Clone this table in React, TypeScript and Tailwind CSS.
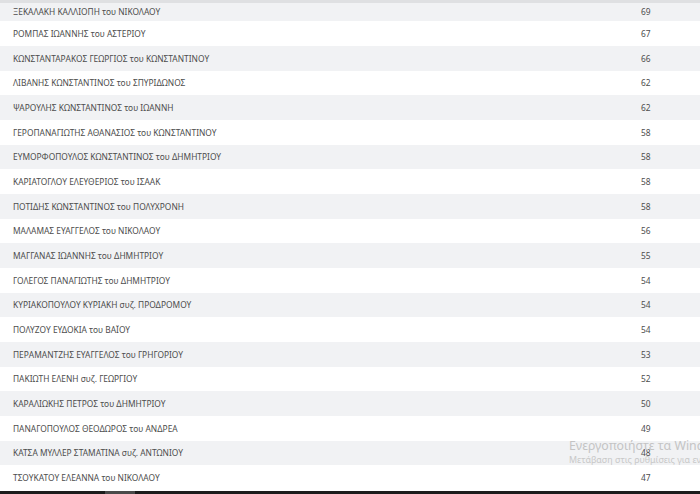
import React from "react";

const rows: [string, number][] = [
  ["ΞΕΚΑΛΑΚΗ ΚΑΛΛΙΟΠΗ του ΝΙΚΟΛΑΟΥ", 69],
  ["ΡΟΜΠΑΣ ΙΩΑΝΝΗΣ του ΑΣΤΕΡΙΟΥ", 67],
  ["ΚΩΝΣΤΑΝΤΑΡΑΚΟΣ ΓΕΩΡΓΙΟΣ του ΚΩΝΣΤΑΝΤΙΝΟΥ", 66],
  ["ΛΙΒΑΝΗΣ ΚΩΝΣΤΑΝΤΙΝΟΣ του ΣΠΥΡΙΔΩΝΟΣ", 62],
  ["ΨΑΡΟΥΛΗΣ ΚΩΝΣΤΑΝΤΙΝΟΣ του ΙΩΑΝΝΗ", 62],
  ["ΓΕΡΟΠΑΝΑΓΙΩΤΗΣ ΑΘΑΝΑΣΙΟΣ του ΚΩΝΣΤΑΝΤΙΝΟΥ", 58],
  ["ΕΥΜΟΡΦΟΠΟΥΛΟΣ ΚΩΝΣΤΑΝΤΙΝΟΣ του ΔΗΜΗΤΡΙΟΥ", 58],
  ["ΚΑΡΙΑΤΟΓΛΟΥ ΕΛΕΥΘΕΡΙΟΣ του ΙΣΑΑΚ", 58],
  ["ΠΟΤΙΔΗΣ ΚΩΝΣΤΑΝΤΙΝΟΣ του ΠΟΛΥΧΡΟΝΗ", 58],
  ["ΜΑΛΑΜΑΣ ΕΥΑΓΓΕΛΟΣ του ΝΙΚΟΛΑΟΥ", 56],
  ["ΜΑΓΓΑΝΑΣ ΙΩΑΝΝΗΣ του ΔΗΜΗΤΡΙΟΥ", 55],
  ["ΓΟΛΕΓΟΣ ΠΑΝΑΓΙΩΤΗΣ του ΔΗΜΗΤΡΙΟΥ", 54],
  ["ΚΥΡΙΑΚΟΠΟΥΛΟΥ ΚΥΡΙΑΚΗ συζ. ΠΡΟΔΡΟΜΟΥ", 54],
  ["ΠΟΛΥΖΟΥ ΕΥΔΟΚΙΑ του ΒΑΪΟΥ", 54],
  ["ΠΕΡΑΜΑΝΤΖΗΣ ΕΥΑΓΓΕΛΟΣ του ΓΡΗΓΟΡΙΟΥ", 53],
  ["ΠΑΚΙΩΤΗ ΕΛΕΝΗ συζ. ΓΕΩΡΓΙΟΥ", 52],
  ["ΚΑΡΑΛΙΩΚΗΣ ΠΕΤΡΟΣ του ΔΗΜΗΤΡΙΟΥ", 50],
  ["ΠΑΝΑΓΟΠΟΥΛΟΣ ΘΕΟΔΩΡΟΣ του ΑΝΔΡΕΑ", 49],
  ["ΚΑΤΣΑ ΜΥΛΛΕΡ ΣΤΑΜΑΤΙΝΑ συζ. ΑΝΤΩΝΙΟΥ", 48],
  ["ΤΣΟΥΚΑΤΟΥ ΕΛΕΑΝΝΑ του ΝΙΚΟΛΑΟΥ", 47],
];

export default function App() {
  return (
    <div className="relative h-[494px] w-[700px] overflow-hidden bg-white font-['Noto_Sans',sans-serif] text-[8.4px] text-[#4d4d4d]">
      <div className="h-[3px] bg-[#dfe0e2]" />
      <div className="flex flex-col">
        {rows.map(([name, votes], i) => (
          <div
            key={name}
            className={
              "grid grid-cols-[641px_1fr] items-center " +
              (i === 0 ? "h-[18.3px] " : "h-[24.68px] pt-[1px] ") +
              (i % 2 === 0 ? "bg-[#f1f2f4]" : "bg-white")
            }
          >
            <span className="pl-[13px] whitespace-nowrap">{name}</span>
            <span>{votes}</span>
          </div>
        ))}
      </div>

      <div className="pointer-events-none absolute left-[569px] top-[440px] whitespace-nowrap leading-none">
        <div className="text-[12.3px] text-[#c4c4c4]">Ενεργοποιήστε τα Windows</div>
        <div className="mt-[4px] text-[8.9px] text-[#c8c8c8]">Μετάβαση στις ρυθμίσεις για ενεργοποίηση των Windows.</div>
      </div>

      <div className="absolute bottom-0 left-0 flex h-[3px] w-full bg-[#1c1c1c]">
        <div className="ml-[105px] w-[30px] bg-[#4a4a4a]" />
      </div>
    </div>
  );
}
